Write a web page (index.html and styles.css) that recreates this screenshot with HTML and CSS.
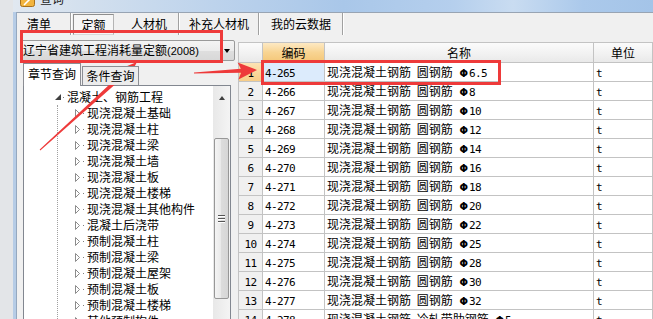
FILE: index.html
```html
<!DOCTYPE html>
<html lang="zh">
<head>
    <meta charset="UTF-8">
    <meta name="viewport" content="width=device-width, initial-scale=1.0">
    <title>查询</title>
    <link rel="stylesheet" href="styles.css">
</head>
<body>

<div class="screen">
    <div class="outside"></div>
    <div class="window">
        <!-- 标题栏 -->
        <div class="titlebar">
            <svg class="app-icon" width="15" height="7" viewBox="0 0 15 7">
                <rect x="0.5" y="-5" width="14" height="11.5" rx="2" fill="#f2b43e" stroke="#a8701c"/>
                <path d="M4 5 L11 -2" stroke="#fff" stroke-width="1.6"/>
            </svg>
            <span class="title-text">查询</span>
        </div>
        <div class="frame">
            <div class="frame-edge"></div>
            <div class="client">
                <!-- 顶部页签 -->
                <div class="tabbar">
                    <div class="tab tab-first">清单</div>
                    <div class="tab-sep"></div>
                    <div class="tab tab-active">定额</div>
                    <div class="tab tab-rcj">人材机</div>
                    <div class="tab-sep"></div>
                    <div class="tab tab-bc">补充人材机</div>
                    <div class="tab-sep"></div>
                    <div class="tab tab-cloud">我的云数据</div>
                    <div class="tab-sep"></div>
                </div>
                <div class="content">
                    <!-- 左侧定额库和章节 -->
                    <div class="left-pane">
                        <div class="combo">
                            <span class="combo-text">辽宁省建筑工程消耗量定额<span class="combo-year">(2008)</span></span>
                            <span class="combo-btn"></span>
                        </div>
                        <div class="sub-tabs">
                            <div class="sub-tab sub-tab-active">章节查询</div>
                            <div class="sub-tab">条件查询</div>
                        </div>
                        <div class="tree-box">
                            <div class="tree" id="tree"></div>
                            <div class="vscroll">
                                <div class="vscroll-up"></div>
                                <div class="vscroll-thumb"><span class="grip"></span></div>
                            </div>
                        </div>
                    </div>
                    <!-- 右侧定额列表 -->
                    <div class="grid-pane">
                        <div class="grid" id="grid">
                            <div class="gh"></div>
                            <div class="gh gh-sort">编码</div>
                            <div class="gh">名称</div>
                            <div class="gh">单位</div>
                        </div>
                    </div>
                </div>
            </div>
        </div>
    </div>
</div>

<!-- 红色标注 -->
<div class="mark mark-combo"></div>
<div class="mark mark-row"></div>
<svg class="arrows" width="653" height="319" viewBox="0 0 653 319">
    <polygon points="40.3,150.4 122.1,78.3 124.5,85.5 137,62 112.5,72.1 119.4,75.3 39.7,149.6"/>
    <polygon points="194,73.6 241.1,72.8 238.4,79.4 257,70 237.6,62.4 240.9,68.8 194,72.4"/>
</svg>

<script>
    // 章节树
    const chapter = {
        title: '混凝土、钢筋工程',
        children: ['现浇混凝土基础', '现浇混凝土柱', '现浇混凝土梁', '现浇混凝土墙', '现浇混凝土板',
            '现浇混凝土楼梯', '现浇混凝土其他构件', '混凝土后浇带', '预制混凝土柱', '预制混凝土梁',
            '预制混凝土屋架', '预制混凝土板', '预制混凝土楼梯', '其他预制构件']
    };
    const tree = document.getElementById('tree');
    const root = document.createElement('div');
    root.className = 'node node-root';
    root.innerHTML = `<span class="exp-open"></span><span class="dot"></span><span class="node-text">${chapter.title}</span>`;
    tree.appendChild(root);

    const children = document.createElement('div');
    children.className = 'children';
    chapter.children.forEach(name => {
        const node = document.createElement('div');
        node.className = 'node node-leaf';
        node.innerHTML = `
            <svg class="exp" width="7" height="9" viewBox="0 0 7 9"><path d="M1.5 0.5 L5.5 4.5 L1.5 8.5 Z" fill="#fff" stroke="#8c8c8c"/></svg>
            <span class="dot"></span><span class="node-text">${name}</span>`;
        children.appendChild(node);
    });
    tree.appendChild(children);

    // 定额子目
    const sizes = ['6.5', '8', '10', '12', '14', '16', '18', '20', '22', '25', '28', '30', '32'];
    const rows = sizes.map((size, i) => ({ code: '4-' + (265 + i), name: '现浇混凝土钢筋 圆钢筋', size: size, unit: 't' }));
    rows.push({ code: '4-278', name: '现浇混凝土钢筋 冷轧带肋钢筋', size: '5', unit: 't' });

    const grid = document.getElementById('grid');
    rows.forEach((row, i) => {
        const sel = i === 0;
        grid.insertAdjacentHTML('beforeend', `
            <div class="gc gc-rn${sel ? ' gc-rn-sel' : ''}"><span class="num">${i + 1}</span></div>
            <div class="gc${sel ? ' gc-sel' : ''}"><span class="num">${row.code}</span></div>
            <div class="gc gc-name">${row.name} <span class="bar">Φ</span><span class="num">${row.size}</span></div>
            <div class="gc"><span class="num">${row.unit}</span></div>
        `);
    });
</script>

</body>
</html>
```

FILE: styles.css
```css
body {
    margin: 0;
    width: 653px;
    height: 319px;
    overflow: hidden;
    position: relative;
    font-family: "Noto Sans CJK SC", sans-serif;
    font-size: 12px;
    color: #000;
    background-color: #e3e5e8;
}
.screen {
    display: flex;
    height: 319px;
}
.outside {
    width: 13px;
    background-color: #e3e5e8;
}
.window {
    flex: 1;
    min-width: 0;
    display: flex;
    flex-direction: column;
}

/* 标题栏 */
.titlebar {
    height: 12px;
    display: flex;
    padding-left: 7px;
    overflow: hidden;
    background: linear-gradient(90deg, #e1e8f0 0px, #d3e0ee 70px, #bdd3ec 200px, #a9c7e9 330px, #b5cfed 440px, #c9dcf1 500px, #abc9eb 570px, #a4c4e8 640px);
}
.app-icon {
    display: block;
}
.title-text {
    margin-left: 5px;
    margin-top: -7px;
    line-height: 12px;
    color: #1e1e1e;
}

.frame {
    flex: 1;
    min-height: 0;
    display: flex;
}
.frame-edge {
    width: 3px;
    background-color: #b6cce6;
    border-right: 1px solid #95a8bf;
}
.client {
    flex: 1;
    min-width: 0;
    display: flex;
    flex-direction: column;
    background-color: #f0f0f0;
    border-top: 1px solid #98a4b3;
}

/* 顶部页签 */
.tabbar {
    height: 22px;
    display: flex;
}
.tab {
    box-sizing: border-box;
    line-height: 22px;
    text-align: center;
    white-space: nowrap;
}
.tab-first {
    width: 53px;
    padding-left: 10px;
    text-align: left;
}
.tab-sep {
    width: 1px;
    background-color: #a0a0a0;
    border-right: 1px solid #fff;
}
.tab-active {
    width: 41px;
    margin: 1px 0 0 1px;
    line-height: 19px;
    border: 1px solid #8e8e8e;
    border-right-color: #b4b4b4;
    border-bottom-color: #d8d8d8;
    background-color: #f6f6f6;
}
.tab-rcj {
    width: 64px;
    padding-left: 6px;
}
.tab-bc {
    width: 78px;
}
.tab-cloud {
    width: 82px;
}

.content {
    flex: 1;
    min-height: 0;
    display: flex;
}

/* 左侧 */
.left-pane {
    width: 221px;
}
.combo {
    margin: 5px 0 0 3px;
    width: 215px;
    height: 21px;
    box-sizing: border-box;
    display: flex;
    align-items: center;
    border: 1px solid #9a9a9a;
    border-radius: 2px;
    background: linear-gradient(#f4f4f4, #ececec 50%, #dfdfdf 50%, #d8d8d8);
}
.combo-text {
    flex: 1;
    padding-left: 2px;
    line-height: 19px;
    white-space: nowrap;
}
.combo-year {
    font-family: "Liberation Sans", sans-serif;
    font-size: 11px;
}
.combo-btn {
    width: 14px;
    height: 19px;
    display: flex;
    align-items: center;
    justify-content: center;
}
.combo-btn::before {
    content: "";
    border-left: 3.5px solid transparent;
    border-right: 3.5px solid transparent;
    border-top: 4px solid #000;
}
.sub-tabs {
    display: flex;
    align-items: flex-start;
    height: 23px;
    margin: 2px 0 -1px 6px;
    position: relative;
    z-index: 1;
}
.sub-tab {
    box-sizing: border-box;
    width: 57px;
    height: 19px;
    margin: 3px 0 0 1px;
    line-height: 17px;
    text-align: center;
    border: 1px solid #8c8e94;
    border-bottom: none;
    background-color: #ececec;
}
.sub-tab-active {
    width: 58px;
    height: 23px;
    margin: 0;
    line-height: 20px;
    background-color: #fff;
}
.tree-box {
    margin-left: 6px;
    width: 208px;
    height: 260px;
    box-sizing: border-box;
    display: flex;
    border: 1px solid #828790;
    background-color: #fff;
}
.tree {
    width: 189px;
    padding-top: 3px;
}
.node {
    display: flex;
    align-items: center;
    height: 16px;
    white-space: nowrap;
}
.node-text {
    line-height: 16px;
}
.node-root {
    padding-left: 31px;
}
.exp-open {
    width: 0;
    height: 0;
    border-left: 6px solid transparent;
    border-bottom: 6px solid #404040;
    margin-right: 2px;
}
.children {
    margin-left: 33px;
    border-left: 1px dotted #a0a0a0;
}
.node-leaf {
    padding-left: 16px;
}
.exp {
    display: block;
    margin-right: 2px;
}
.dot {
    width: 1px;
    height: 1px;
    margin-right: 3px;
    background-color: #808080;
}
.vscroll {
    width: 17px;
    background: linear-gradient(90deg, #e8e8e8, #f4f4f4);
}
.vscroll-up {
    height: 24px;
    display: flex;
    align-items: center;
    justify-content: center;
}
.vscroll-up::before {
    content: "";
    border-left: 3.5px solid transparent;
    border-right: 3.5px solid transparent;
    border-bottom: 4px solid #404040;
}
.vscroll-thumb {
    margin: 28px 1px 0 1px;
    height: 161px;
    box-sizing: border-box;
    display: flex;
    align-items: center;
    justify-content: center;
    border: 1px solid #979797;
    border-radius: 2px;
    background: linear-gradient(90deg, #f4f4f4, #e8e8e8 50%, #dcdcdc 50%, #d6d6d6);
}
.grip {
    width: 7px;
    height: 8px;
    background: repeating-linear-gradient(#555 0 1px, #fff 1px 2px, transparent 2px 3px);
}

/* 右侧表格 */
.grid-pane {
    flex: 1;
    padding-top: 7px;
}
.grid {
    display: grid;
    grid-template-columns: 23px 61px 268px 58px;
    grid-template-rows: 19px;
    grid-auto-rows: 18px;
    gap: 1px;
    padding: 1px;
    background-color: #c3c3c3;
}
.gh {
    line-height: 19px;
    text-align: center;
    background: linear-gradient(#fbfbfb, #f1f1f1 60%, #e9e9e9);
}
.gh-sort {
    background: linear-gradient(#fde9c3, #f8d492 50%, #f4c677);
}
.gc {
    padding-left: 2px;
    line-height: 18px;
    white-space: nowrap;
    overflow: hidden;
    background-color: #fff;
}
.gc-name {
    word-spacing: 3px;
}
.gc-rn {
    padding-left: 0;
    text-align: center;
    background-color: #f0f0f0;
}
.gc-rn-sel {
    background: linear-gradient(#fce3b3, #f7cd88);
}
.gc-sel {
    background-color: #dcebfc;
}
.num {
    font-family: "DejaVu Sans Mono", monospace;
    font-size: 11px;
    letter-spacing: -0.6px;
    word-spacing: 0;
}
.bar {
    font-family: "DejaVu Sans", sans-serif;
    font-size: 10px;
    font-weight: bold;
    margin: 0 1px 0 1px;
}

/* 红色标注 */
.mark {
    position: absolute;
    box-sizing: border-box;
    border: 3px solid #ee3a3a;
    pointer-events: none;
}
.mark-combo {
    left: 20px;
    top: 30px;
    width: 203px;
    height: 33px;
}
.mark-row {
    left: 261px;
    top: 60px;
    width: 240px;
    height: 25px;
}
.arrows {
    position: absolute;
    left: 0;
    top: 0;
    pointer-events: none;
    fill: #ee3a3a;
}
```
